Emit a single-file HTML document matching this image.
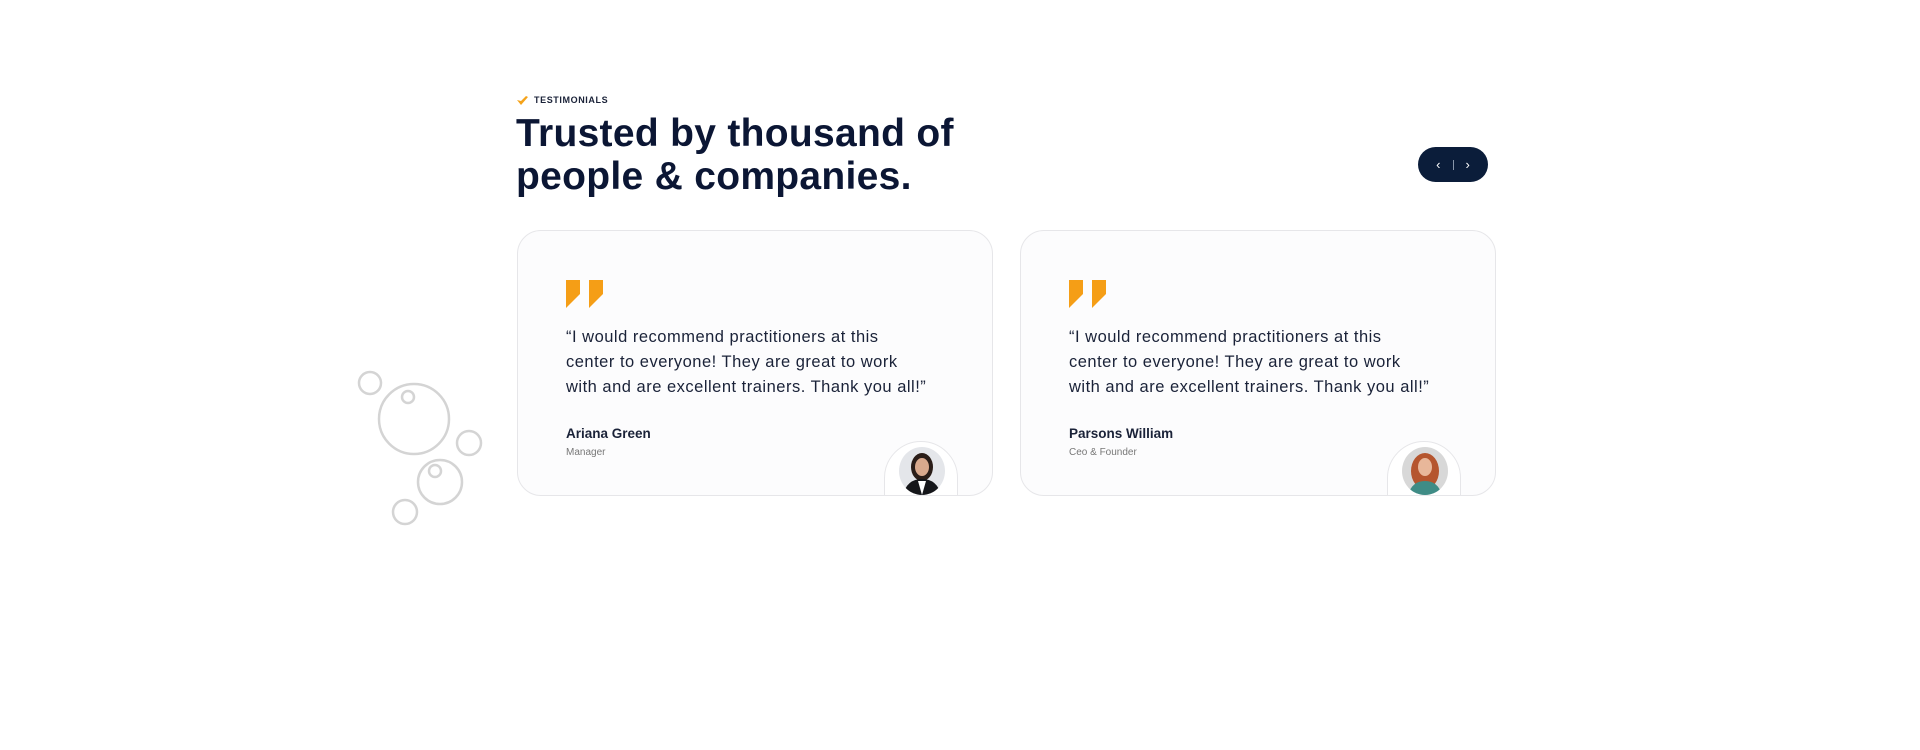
<!DOCTYPE html>
<html><head><meta charset="utf-8"><style>
*{margin:0;padding:0;box-sizing:border-box}
body{width:1920px;height:750px;background:#fff;position:relative;overflow:hidden;font-family:"Liberation Sans",sans-serif;color:#0b1634}
.lab{position:absolute;left:517px;top:95px;font-size:9px;font-weight:bold;letter-spacing:.6px;color:#1a2238;display:flex;align-items:center;gap:6px}
h1{position:absolute;left:516px;top:112px;font-size:39px;line-height:43px;font-weight:bold;color:#0b1634;letter-spacing:.3px}
.nav{position:absolute;left:1418px;top:147px;width:70px;height:35px;border-radius:18px;background:#0b1d3a;color:#fff;display:flex;align-items:center;justify-content:center;gap:12px;font-size:13px}
.nav i{width:1px;height:10px;background:#8896aa;display:block}
.card{position:absolute;top:230px;width:476px;height:266px;border:1.5px solid #e6e6e9;border-radius:24px;background:#fcfcfd;overflow:hidden}
.q{position:absolute;left:48px;top:49px}
.t{position:absolute;left:48px;top:94px;font-size:16.5px;line-height:25px;color:#1a2238;white-space:nowrap;letter-spacing:.5px}
.n{position:absolute;left:48px;top:195px;font-size:13.5px;font-weight:bold;color:#1a2238}
.r{position:absolute;left:48px;top:216px;font-size:10px;color:#777}
.tab{position:absolute;left:366px;top:210px;width:74px;height:80px;border:1.5px solid #e6e6e9;border-radius:37px 37px 0 0;background:#fff}
.av{position:absolute;left:381px;top:216px;width:46px;height:48px;border-radius:50%;overflow:hidden}
</style></head><body>
<div class="lab"><svg width="11" height="9" viewBox="0 0 11 9"><path d="M0 4 L4 9 L11 1 L9 0 L4 5 Z" fill="#f5a31a"/></svg>TESTIMONIALS</div>
<h1>Trusted by thousand of<br>people &amp; companies.</h1>
<div class="nav"><span>&#8249;</span><i></i><span>&#8250;</span></div>
<svg style="position:absolute;left:350px;top:360px" width="140" height="180"><g fill="none" stroke="#d4d4d4" stroke-width="2.5"><circle cx="20" cy="23" r="11"/><circle cx="64" cy="59" r="35"/><circle cx="58" cy="37" r="6"/><circle cx="119" cy="83" r="12"/><circle cx="90" cy="122" r="22"/><circle cx="85" cy="111" r="6"/><circle cx="55" cy="152" r="12"/></g></svg>

<div class="card" style="left:517px">
<svg class="q" width="38" height="28" viewBox="0 0 38 28"><path d="M0 0H14V14L0 28Z M23 0H37V14L23 28Z" fill="#f59e16"/></svg>
<div class="t">“I would recommend practitioners at this<br>center to everyone! They are great to work<br>with and are excellent trainers. Thank you all!”</div>
<div class="n">Ariana Green</div><div class="r">Manager</div>
<div class="tab"></div>
<div class="av"><svg width="46" height="48"><rect width="46" height="48" fill="#e4e6ea"/><ellipse cx="23" cy="20" rx="11" ry="14" fill="#2a1d18"/><ellipse cx="23" cy="20" rx="7" ry="9" fill="#d9a98d"/><path d="M4 48 Q8 32 23 32 Q38 32 42 48Z" fill="#15161a"/><path d="M19 34 L23 48 L27 34Z" fill="#fff"/></svg></div>
</div>

<div class="card" style="left:1020px">
<svg class="q" width="38" height="28" viewBox="0 0 38 28"><path d="M0 0H14V14L0 28Z M23 0H37V14L23 28Z" fill="#f59e16"/></svg>
<div class="t">“I would recommend practitioners at this<br>center to everyone! They are great to work<br>with and are excellent trainers. Thank you all!”</div>
<div class="n">Parsons William</div><div class="r">Ceo &amp; Founder</div>
<div class="tab"></div>
<div class="av"><svg width="46" height="48"><rect width="46" height="48" fill="#d8d8d8"/><ellipse cx="23" cy="24" rx="14" ry="18" fill="#b5552e"/><ellipse cx="23" cy="20" rx="7" ry="9" fill="#e8b79a"/><path d="M6 48 Q10 34 23 34 Q36 34 40 48Z" fill="#3f8c86"/></svg></div>
</div>
</body></html>
